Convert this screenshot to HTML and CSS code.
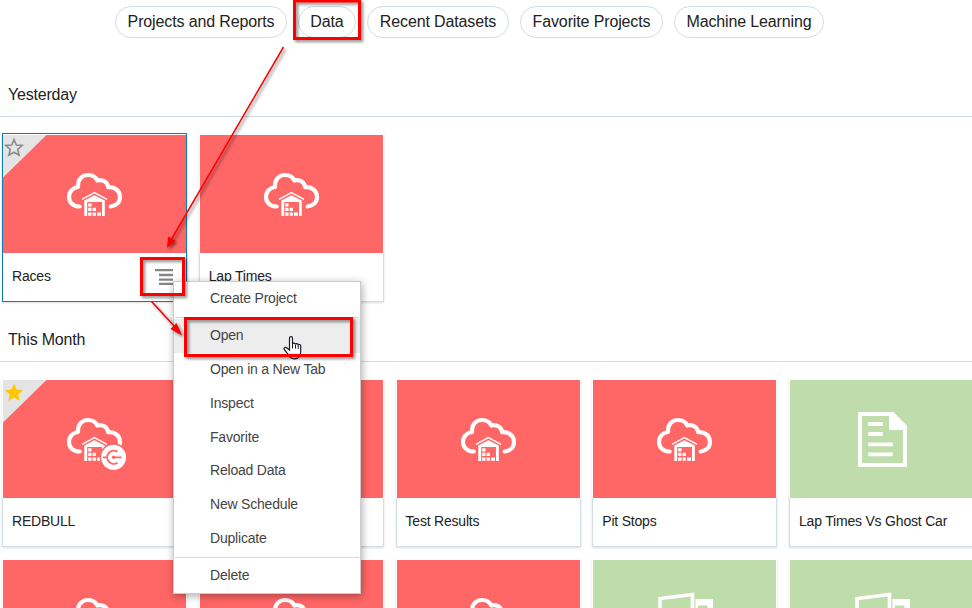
FILE: index.html
```html
<!DOCTYPE html>
<html lang="en">
<head>
<meta charset="utf-8">
<title>Data</title>
<link rel="stylesheet" href="styles.css">
</head>
<body>
<svg class="defs" width="0" height="0" aria-hidden="true">
  <symbol id="warehouse" viewBox="0 0 64 60">
    <path d="M14.7 36.5C8 36.5 4 32.2 4 27C4 21.5 8 17.5 13 17C12.5 9.500 17 5 23 5C27.500 5 31 7.500 32.300 10.500C37.500 9 42.200 12 43.300 17.200C50 16.500 55 21 55 27C55 32 51.500 35.800 45.700 36.500" fill="none" stroke="#fff" stroke-width="4.200" stroke-linecap="round" stroke-linejoin="round"/>
    <path d="M17 29.300L29.400 22.600L42 29.300" fill="none" stroke="#fff" stroke-width="1.500"/>
    <path fill="#fff" d="M19.300 46V30.500L29.400 25.200L39.800 30.500V46H37V32H22.200V46ZM23.200 33.200h3.300v3.200h-3.300zM23.200 37.800h3.300v3.200h-3.300zM27.600 37.800h3.300v3.200h-3.300zM23.200 42.400h3.300v3.400h-3.300zM27.600 42.400h3.300v3.400h-3.300zM32 42.400h4v3.400h-4z"/>
  </symbol>
  <symbol id="document" viewBox="0 0 50 56">
    <path d="M2 2H34.500L47 14.500V53H2Z" fill="none" stroke="#fff" stroke-width="4"/>
    <path d="M31 2H36L48 14V18H31Z" fill="#fff"/>
    <path d="M10.300 12h14.500M10.300 22h14.500M10.300 32.400h24.500M10.300 42.400h24.500" stroke="#fff" stroke-width="3.800"/>
  </symbol>
  <symbol id="charts" viewBox="0 0 60 50">
    <path d="M2 50V6.500L34.500 2.500V50" fill="none" stroke="#fff" stroke-width="3.600"/>
    <path d="M37.500 50V7H55V50H49.500V13.500H40V50Z" fill="#fff"/>
  </symbol>
</svg>

<nav class="filters">
  <a class="pill projects">Projects and Reports</a>
  <a class="pill data">Data</a>
  <a class="pill recent">Recent Datasets</a>
  <a class="pill favorites">Favorite Projects</a>
  <a class="pill learning">Machine Learning</a>
</nav>

<section class="group yesterday">
  <h2>Yesterday</h2>
  <div class="cards">
    <article class="card selected">
      <div class="art"><svg class="cloud"><use href="#warehouse"/></svg>
        <svg class="corner" viewBox="0 0 44 44"><path d="M0 0H43.500L0 42.500Z" fill="#e4e4e4"/><path d="M11 4.500L13.300 10L19.200 10.500L14.700 14.400L16.100 20.200L11 17.200L5.900 20.200L7.300 14.400L2.800 10.500L8.700 10Z" fill="none" stroke="#8a8a8a" stroke-width="1.600"/></svg>
      </div>
      <div class="label">Races
        <svg class="more" viewBox="0 0 18 16"><path d="M0 1.200h18M4 6h14M4 10.600h14M4 15h14" stroke="#858585" stroke-width="2.300"/></svg>
      </div>
    </article>
    <article class="card"><div class="art"><svg class="cloud"><use href="#warehouse"/></svg></div><div class="label">Lap Times</div></article>
  </div>
</section>

<section class="group">
  <h2>This Month</h2>
  <div class="cards">
    <article class="card">
      <div class="art"><svg class="cloud" viewBox="0 0 64 60"><use href="#warehouse" width="64" height="60"/><circle cx="48.600" cy="42.300" r="14" fill="#f66"/><circle cx="48.600" cy="42.300" r="12.500" fill="#fff"/><path d="M52.500 36.800A6.600 6.600 0 1 0 52.500 47.800M38 42.300h3.500M49 42.300h7.500" fill="none" stroke="#f66" stroke-width="1.800"/><circle cx="48.500" cy="42.300" r="1.700" fill="#f66"/></svg>
        <svg class="corner" viewBox="0 0 44 44"><path d="M0 0H43.500L0 42.500Z" fill="#e4e4e4"/><path d="M11 3.500L13.600 9.600L20 10.200L15.200 14.500L16.700 21L11 17.600L5.300 21L6.800 14.500L2 10.200L8.400 9.600Z" fill="#ffc600"/></svg>
      </div>
      <div class="label">REDBULL</div>
    </article>
    <article class="card"><div class="art"><svg class="cloud"><use href="#warehouse"/></svg></div><div class="label"></div></article>
    <article class="card"><div class="art"><svg class="cloud"><use href="#warehouse"/></svg></div><div class="label">Test Results</div></article>
    <article class="card"><div class="art"><svg class="cloud"><use href="#warehouse"/></svg></div><div class="label">Pit Stops</div></article>
    <article class="card"><div class="art green"><svg class="doc"><use href="#document"/></svg></div><div class="label">Lap Times Vs Ghost Car</div></article>
    <article class="card"><div class="art"><svg class="cloud"><use href="#warehouse"/></svg></div><div class="label"></div></article>
    <article class="card"><div class="art"><svg class="cloud"><use href="#warehouse"/></svg></div><div class="label"></div></article>
    <article class="card"><div class="art"><svg class="cloud"><use href="#warehouse"/></svg></div><div class="label"></div></article>
    <article class="card"><div class="art green"><svg class="chart"><use href="#charts"/></svg></div><div class="label"></div></article>
    <article class="card"><div class="art green"><svg class="chart"><use href="#charts"/></svg></div><div class="label"></div></article>
  </div>
</section>

<ul class="menu">
  <li>Create Project</li>
  <li class="rule"></li>
  <li class="active">Open</li>
  <li>Open in a New Tab</li>
  <li>Inspect</li>
  <li>Favorite</li>
  <li>Reload Data</li>
  <li>New Schedule</li>
  <li>Duplicate</li>
  <li class="rule"></li>
  <li>Delete</li>
</ul>

<svg class="callouts" viewBox="0 0 972 608">
  <path d="M289.500 350V338.500C289.500 336 292.500 336 292.500 338.500V344C293 342.500 295.500 342.800 295.500 344.500C296 343.200 298 343.500 298.200 345C299 344 300.700 344.700 300.700 346V351.500C300.700 356 298.500 358.800 294.500 358.800C290.500 358.800 288.800 356 287.500 353.500L284.200 349.500C283.500 348 285.500 346.500 287 348Z" fill="#fff" stroke="#1a1a2c" stroke-width="1.200"/>
  <path d="M292.500 344V348.500M295.500 345V348.500M298.200 345.500V349" stroke="#1a1a2c"/>
  <g class="marks" fill="none" stroke="#f00">
    <path d="M294.500 1H359.500V38.500H294.500Z" stroke-width="3"/>
    <path d="M141.500 258.500H183.500V294.500H141.500Z" stroke-width="3"/>
    <path d="M185.500 318.500H351.500V355.500H185.500Z" stroke-width="3"/>
    <path d="M283.500 47L171 240M151.500 301.500L176 328" stroke-width="1.500"/>
    <path d="M167 248L168 236.500L175.500 240.500ZM182 335.500L170.500 329L176.500 323Z" fill="#f00" stroke="none"/>
  </g>
</svg>
</body>
</html>
```

FILE: styles.css
```css
* { box-sizing: border-box; }

body {
  margin: 0;
  height: 608px;
  overflow: hidden;
  position: relative;
  background: #fff;
  color: #222;
  font: 14px "Liberation Sans", Arial, sans-serif;
  letter-spacing: -0.2px;
}

.defs { position: absolute; }

.filters {
  display: flex;
  height: 38px;
  padding: 6px 0 0 115px;
  gap: 11px;
}

.pill {
  height: 32px;
  border: 1px solid #d3dde6;
  border-radius: 16px;
  font-size: 16px;
  letter-spacing: -0.13px;
  line-height: 29px;
  text-align: center;
  white-space: nowrap;
}
.projects { width: 172px; }
.data { width: 58px; }
.recent { width: 142px; }
.favorites { width: 143px; }
.learning { width: 150px; }

.group { height: 245px; }
.yesterday { margin-top: 34px; }

.group h2 {
  height: 45px;
  margin: 0 0 16px;
  padding-left: 8px;
  border-bottom: 1px solid #d3dde6;
  font-size: 16px;
  font-weight: normal;
  line-height: 46px;
}

.cards {
  display: grid;
  grid-template-columns: repeat(5, 185px);
  gap: 11px 11.75px;
  padding-left: 2px;
}

.card {
  height: 169px;
  padding-top: 2px;
  box-shadow: 0 1px 2px #0002;
}

.art {
  position: relative;
  height: 118px;
  margin: 0 1px;
  background: #f66;
}
.green { background: #bfdcab; }

.label {
  display: flex;
  justify-content: space-between;
  height: 49px;
  padding: 15px 12px 0 9px;
  border: solid #d3dde6;
  border-width: 0 1px 1px;
  line-height: 17px;
}

.selected { padding-top: 1px; border: 1px solid #0b7ab8; }
.selected .art { margin: 0; }
.selected .label { border: 0; height: 48px; padding: 15px 13px 0 9px; }

.cloud { display: block; width: 64px; height: 60px; position: relative; left: 62px; top: 35px; }
.doc { display: block; width: 50px; height: 56px; position: relative; left: 68px; top: 32px; }
.chart { display: block; width: 60px; height: 50px; position: relative; left: 65px; top: 32px; }
.corner { position: absolute; left: 0; top: 0; width: 44px; height: 44px; }
.more { width: 18px; height: 16px; margin-top: 1px; }

.menu {
  position: absolute;
  left: 173px;
  top: 281px;
  width: 188px;
  height: 313px;
  margin: 0;
  padding: 0;
  list-style: none;
  background: #fff;
  border: 1px solid #ccc;
  box-shadow: 1px 2px 8px #0005;
  color: #444;
}
.menu li { height: 33.8px; padding-left: 36px; line-height: 33px; }
.menu .rule { height: 1px; margin: 1px 1px 1.500px; background: #d6d6d6; }
.menu .active { background: #ededed; }

.callouts { position: absolute; left: 0; top: 0; width: 972px; height: 608px; }
.marks { filter: drop-shadow(2px 2px 1.500px #0007); }
```
